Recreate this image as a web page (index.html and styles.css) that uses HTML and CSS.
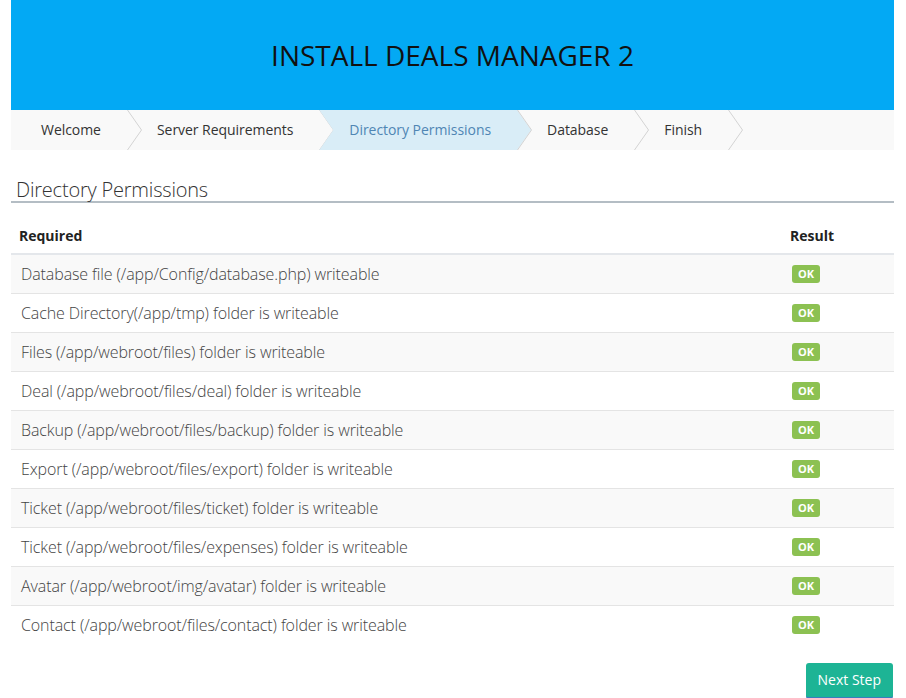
FILE: index.html
```html
<!DOCTYPE html>
<html>
<head>
<meta charset="utf-8">
<title>Install Deals Manager 2</title>
<link rel="stylesheet" href="styles.css">
</head>
<body>
<div class="page">
  <header class="banner">
    <h1 class="banner-title">INSTALL DEALS MANAGER 2</h1>
  </header>
  <ul class="steps">
    <li class="step">Welcome<svg class="chev" width="15" height="40" viewBox="0 0 15 40"><polyline points="0.5,0 14.5,20 0.5,40" fill="none" stroke="#d3d3d3" stroke-width="1"/></svg></li>
    <li class="step">Server Requirements<svg class="chev" width="15" height="40" viewBox="0 0 15 40"><polyline points="0.5,0 14.5,20 0.5,40" fill="none" stroke="#d3d3d3" stroke-width="1"/></svg></li>
    <li class="step step-active">Directory Permissions<svg class="chev" width="15" height="40" viewBox="0 0 15 40"><polyline points="0.5,0 14.5,20 0.5,40" fill="none" stroke="#d3d3d3" stroke-width="1"/></svg></li>
    <li class="step">Database<svg class="chev" width="15" height="40" viewBox="0 0 15 40"><polyline points="0.5,0 14.5,20 0.5,40" fill="none" stroke="#d3d3d3" stroke-width="1"/></svg></li>
    <li class="step">Finish<svg class="chev" width="15" height="40" viewBox="0 0 15 40"><polyline points="0.5,0 14.5,20 0.5,40" fill="none" stroke="#d3d3d3" stroke-width="1"/></svg></li>
  </ul>
  <h2 class="section-title">Directory Permissions</h2>
  <table class="perm-table">
    <thead>
      <tr><th class="col-req">Required</th><th class="col-res">Result</th></tr>
    </thead>
    <tbody>
      <tr><td>Database file (/app/Config/database.php) writeable</td><td class="res"><span class="ok">OK</span></td></tr>
      <tr><td>Cache Directory(/app/tmp) folder is writeable</td><td class="res"><span class="ok">OK</span></td></tr>
      <tr><td>Files (/app/webroot/files) folder is writeable</td><td class="res"><span class="ok">OK</span></td></tr>
      <tr><td>Deal (/app/webroot/files/deal) folder is writeable</td><td class="res"><span class="ok">OK</span></td></tr>
      <tr><td>Backup (/app/webroot/files/backup) folder is writeable</td><td class="res"><span class="ok">OK</span></td></tr>
      <tr><td>Export (/app/webroot/files/export) folder is writeable</td><td class="res"><span class="ok">OK</span></td></tr>
      <tr><td>Ticket (/app/webroot/files/ticket) folder is writeable</td><td class="res"><span class="ok">OK</span></td></tr>
      <tr><td>Ticket (/app/webroot/files/expenses) folder is writeable</td><td class="res"><span class="ok">OK</span></td></tr>
      <tr><td>Avatar (/app/webroot/img/avatar) folder is writeable</td><td class="res"><span class="ok">OK</span></td></tr>
      <tr><td>Contact (/app/webroot/files/contact) folder is writeable</td><td class="res"><span class="ok">OK</span></td></tr>
    </tbody>
  </table>
  <div class="actions">
    <button class="btn-next" type="button">Next Step</button>
  </div>
</div>
</body>
</html>
```

FILE: styles.css
```css
* { box-sizing: border-box; }
html, body { margin: 0; padding: 0; background: #fff; }
body {
  font-family: "Open Sans", "Liberation Sans", sans-serif;
  color: #333;
  font-size: 14px;
}
.page {
  margin: 0 12px 0 11px;
}
.banner {
  background: #03a9f4;
  height: 110px;
  display: flex;
  align-items: center;
  justify-content: center;
}
.banner-title {
  margin: 0;
  font-size: 28px;
  font-weight: 400;
  color: #111;
}
.steps {
  list-style: none;
  margin: 0;
  padding: 0;
  height: 40px;
  background: #f9f9f9;
  display: flex;
}
.step {
  position: relative;
  z-index: 0;
  height: 40px;
  line-height: 40px;
  padding: 0 26px 0 30px;
  color: #333;
  white-space: nowrap;
  letter-spacing: -0.05px;
}
.step-active { color: #4f86b4; }
.step-active::before {
  content: "";
  position: absolute;
  top: 0; bottom: 0; left: 0; right: -14px;
  background: #d9edf7;
  clip-path: polygon(0 0, calc(100% - 14px) 0, 100% 50%, calc(100% - 14px) 100%, 0 100%, 14px 50%);
  z-index: -1;
}
.step > .chev {
  position: absolute;
  top: 0;
  right: -15px;
  z-index: 2;
}
.section-title {
  margin: 29px 0 15px;
  padding-left: 5px;
  font-size: 20px;
  font-weight: 300;
  line-height: 22px;
  letter-spacing: -0.2px;
  color: #333;
  border-bottom: 2px solid #b4bdc4;
}
.perm-table {
  width: 100%;
  border-collapse: collapse;
}
.perm-table th {
  text-align: left;
  font-weight: 700;
  font-size: 14px;
  line-height: 20px;
  padding: 8px 8px 7px;
  border-bottom: 2px solid #e4e7eb;
  color: #222;
}
.perm-table .col-res { width: 112px; }
.perm-table td {
  font-size: 16px;
  font-weight: 300;
  line-height: 20px;
  height: 39px;
  padding: 9px 10px;
  border-top: 1px solid #e4e4e4;
  color: #444;
  letter-spacing: -0.1px;
}
.perm-table tbody tr:first-child td { border-top: 0; height: 38px; }
.perm-table tbody tr:nth-child(odd) td { background: #f9f9f9; }
.perm-table td.res { padding-left: 10px; }
.ok {
  display: inline-block;
  vertical-align: top;
  margin-top: 1px;
  background: #8cc152;
  color: #fff;
  font-size: 11px;
  font-weight: 700;
  line-height: 12px;
  padding: 3px 6px 3px;
  border-radius: 3px;
  letter-spacing: 0;
}
.actions {
  display: flex;
  justify-content: flex-end;
  margin-top: 18px;
}
.btn-next {
  font-family: "Open Sans", "Liberation Sans", sans-serif;
  font-size: 14px;
  color: #fff;
  background: #1db495;
  border: 0;
  border-bottom: 2px solid #3a7dc0;
  border-radius: 3px;
  padding: 7px 12px 7px;
  line-height: 20px;
  margin-right: 1px;
}
```
